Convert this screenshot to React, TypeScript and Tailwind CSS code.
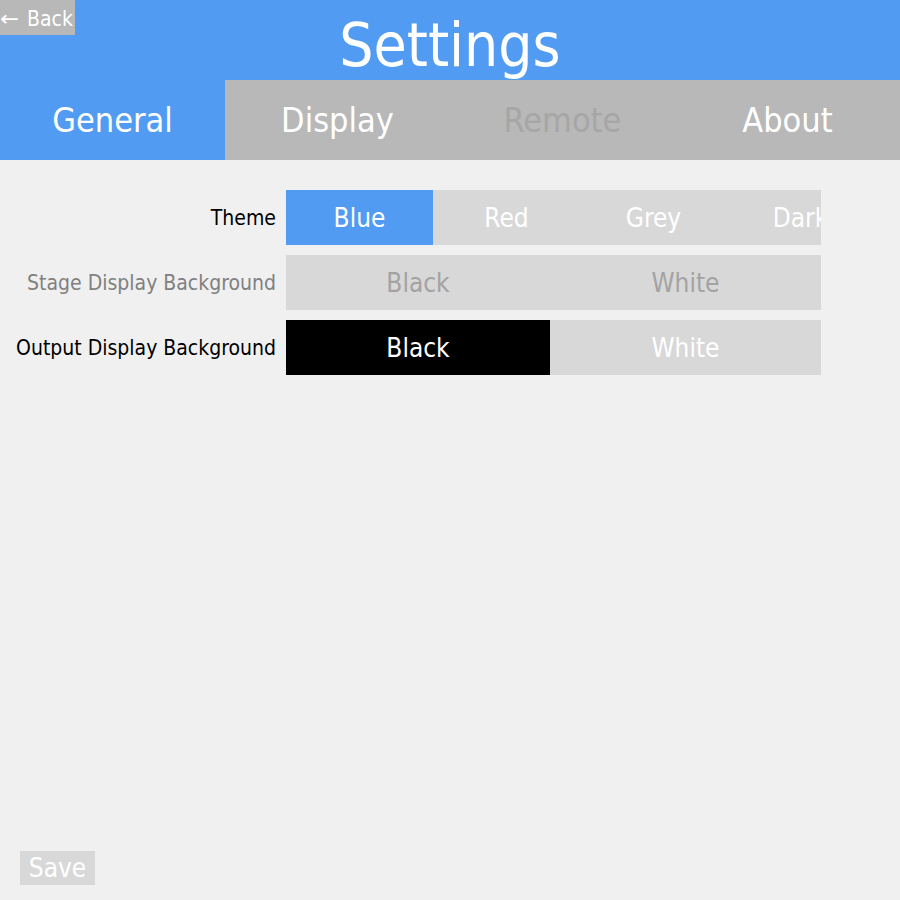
import React from "react";

const font = { fontFamily: "'DejaVu Sans Condensed','DejaVu Sans',sans-serif" };

function Row({ label, labelClass, children }: { label: string; labelClass: string; children: React.ReactNode }) {
  return (
    <div className="flex items-center h-[55px]">
      <div className={`w-[286px] pr-[10px] pt-[3px] text-right text-[21px] whitespace-nowrap ${labelClass}`}>{label}</div>
      <div className="w-[535px] h-full flex overflow-hidden">{children}</div>
    </div>
  );
}

const btn = "text-[26px] flex items-center justify-center pt-[2px]";

export default function App() {
  return (
    <div className="w-[900px] h-[900px] bg-[#f0f0f0] relative flex flex-col" style={font}>
      <div className="h-[80px] bg-[#519cf2] flex items-center justify-center">
        <div className="text-white text-[60px] leading-none mt-[10px]">Settings</div>
      </div>
      <div className="absolute left-0 top-0 w-[75px] h-[35px] bg-[#b8b8b8] text-white text-[21px] flex items-center leading-none pt-[3px]">
        <span className="inline-block w-[27px] text-left scale-x-[1.2] origin-left">←</span>
        <span>Back</span>
      </div>
      <div className="h-[80px] flex">
        <div className="w-[225px] bg-[#519cf2] text-white text-[34px] flex items-center justify-center">General</div>
        <div className="w-[225px] bg-[#b8b8b8] text-white text-[34px] flex items-center justify-center">Display</div>
        <div className="w-[225px] bg-[#b8b8b8] text-[#a6a6a6] text-[34px] flex items-center justify-center">Remote</div>
        <div className="w-[225px] bg-[#b8b8b8] text-white text-[34px] flex items-center justify-center">About</div>
      </div>
      <div className="flex flex-col gap-[10px] pt-[30px] flex-1">
        <Row label="Theme" labelClass="text-black">
          <div className={`w-[147px] shrink-0 bg-[#519cf2] text-white ${btn}`}>Blue</div>
          <div className={`w-[147px] shrink-0 bg-[#d8d8d8] text-white ${btn}`}>Red</div>
          <div className={`w-[147px] shrink-0 bg-[#d8d8d8] text-white ${btn}`}>Grey</div>
          <div className={`w-[147px] shrink-0 bg-[#d8d8d8] text-white ${btn}`}>Dark</div>
        </Row>
        <Row label="Stage Display Background" labelClass="text-[#808080]">
          <div className={`w-[264px] shrink-0 bg-[#d8d8d8] text-[#a3a3a3] ${btn}`}>Black</div>
          <div className={`flex-1 bg-[#d8d8d8] text-[#a3a3a3] ${btn}`}>White</div>
        </Row>
        <Row label="Output Display Background" labelClass="text-black">
          <div className={`w-[264px] shrink-0 bg-black text-white ${btn}`}>Black</div>
          <div className={`flex-1 bg-[#d8d8d8] text-white ${btn}`}>White</div>
        </Row>
        <div className="flex-1" />
        <div className="pl-[20px] pb-[15px]">
          <div className="w-[75px] h-[34px] bg-[#d8d8d8] text-white text-[26px] flex items-center justify-center leading-none">Save</div>
        </div>
      </div>
    </div>
  );
}
